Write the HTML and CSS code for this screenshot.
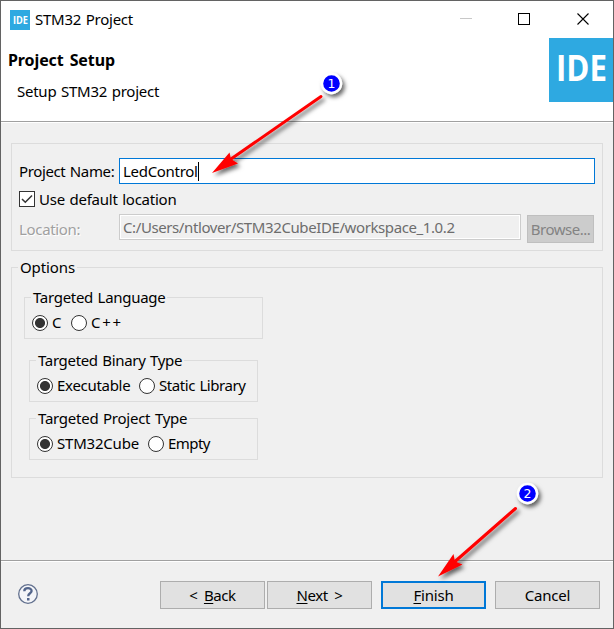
FILE: index.html
```html
<!DOCTYPE html>
<html lang="en">
<head>
<meta charset="utf-8">
<title>STM32 Project</title>
<link rel="stylesheet" href="styles.css">
</head>
<body>
<main class="window">
  <header class="titlebar">
    <svg class="app-icon" width="20" height="20"><rect width="20" height="20" fill="#2ea9e1"/><text x="3" y="13.500" textLength="15" lengthAdjust="spacingAndGlyphs">IDE</text></svg>
    <h1 class="title">STM32 Project</h1>
    <svg class="controls" width="130" height="14" fill="none">
      <path d="M0 6.500h12" stroke="#c8c8c8"/>
      <rect x="58.500" y="1.500" width="11" height="11" stroke="#000"/>
      <path d="M117.500 1.500l11 11M128.500 1.500l-11 11" stroke="#000" stroke-width="1.100"/>
    </svg>
  </header>
  <section class="banner">
    <div class="banner-text">
      <h2 class="heading">Project Setup</h2>
      <p class="subheading">Setup STM32 project</p>
    </div>
    <svg class="logo" width="64" height="64"><rect width="64" height="64" fill="#2ea9e1"/><text x="7" y="43" textLength="51" lengthAdjust="spacingAndGlyphs">IDE</text></svg>
  </section>
  <section class="content">
    <div class="group location-group">
      <label class="name-label t-name">Project Name:</label>
      <div class="field active"><span class="t-value">LedControl</span><i class="caret"></i></div>
      <label class="check-row"><svg width="16" height="16"><rect x=".5" y=".5" width="15" height="15" fill="#fff" stroke="#333"/><path d="M3 8l3.300 3.300L13 4.500" fill="none" stroke="#333" stroke-width="1.500"/></svg><span class="t-default">Use default location</span></label>
      <label class="location-label t-location">Location:</label>
      <div class="field disabled"><span class="t-path">C:/Users/ntlover/STM32CubeIDE/workspace_1.0.2</span></div>
      <button class="browse" disabled><span class="t-browse">Browse...</span></button>
    </div>
    <div class="group options">
      <div class="legend t-options">Options</div>
      <div class="group choice language">
        <div class="legend t-language">Targeted Language</div>
        <div class="radios"><i class="radio on"></i><span class="t-c">C</span><i class="radio"></i><span class="t-cpp">C++</span></div>
      </div>
      <div class="group choice binary">
        <div class="legend t-binary">Targeted Binary Type</div>
        <div class="radios"><i class="radio on"></i><span class="t-exe">Executable</span><i class="radio"></i><span class="t-static">Static Library</span></div>
      </div>
      <div class="group choice project">
        <div class="legend t-project">Targeted Project Type</div>
        <div class="radios"><i class="radio on"></i><span class="t-cube">STM32Cube</span><i class="radio"></i><span class="t-empty">Empty</span></div>
      </div>
    </div>
  </section>
  <footer class="footer">
    <svg class="help" width="20" height="20"><circle cx="10" cy="10" r="9.300" fill="#f4f5f8" stroke="#62708e" stroke-width="1.300"/><path d="M6.300 7.200C6.300 3.200 13.600 3.200 13.600 7C13.600 9.300 10.200 9.300 10.200 12.200" fill="none" stroke="#53658b" stroke-width="2.300"/><rect x="9" y="14" width="2.500" height="2.500" fill="#53658b"/></svg>
    <button class="btn back"><span class="t-back">&lt; <u>B</u>ack</span></button>
    <button class="btn next"><span class="t-next"><u>N</u>ext &gt;</span></button>
    <button class="btn finish"><span class="t-finish"><u>F</u>inish</span></button>
    <button class="btn cancel"><span class="t-cancel">Cancel</span></button>
  </footer>
  <svg class="annotations" width="614" height="629">
    <defs><filter id="shadow" x="-40%" y="-40%" width="190%" height="190%"><feDropShadow dx="2.500" dy="3" stdDeviation="2" flood-color="#000" flood-opacity=".6"/></filter></defs>
    <g filter="url(#shadow)">
      <path d="M321 96.500L231 159" stroke="#f00" stroke-width="3" stroke-linecap="round"/>
      <path d="M212 173L229.500 152.500L231 159L238 163.500Z" fill="#f00"/>
    </g>
    <g filter="url(#shadow)">
      <path d="M515.500 508.500L455 561.500" stroke="#f00" stroke-width="3" stroke-linecap="round"/>
      <path d="M438 576.500L453.500 554L455 561.500L462.500 564.500Z" fill="#f00"/>
    </g>
    <g class="marker"><circle cx="331.500" cy="83.500" r="9.500" filter="url(#shadow)"/><text x="331.500" y="88">1</text></g>
    <g class="marker"><circle cx="527.500" cy="493.500" r="9.500" filter="url(#shadow)"/><text x="527.500" y="498">2</text></g>
  </svg>
</main>
</body>
</html>
```
FILE: styles.css
```css
* { box-sizing: border-box; }
body { margin: 0; font: 15px/20px "Noto Sans", sans-serif; color: #000; letter-spacing: -.25px; word-spacing: 1px; }
h1, h2, p { margin: 0; font: inherit; }
span, label, .legend, .title, .heading, .subheading { white-space: nowrap; }
button { font: inherit; padding: 0; letter-spacing: inherit; word-spacing: inherit; }
u { text-decoration-thickness: 1px; text-underline-offset: 2px; }
svg text { letter-spacing: 0; word-spacing: 0; }
.window { width: 614px; height: 629px; border: 1px solid #636363; background: #f0f0f0; display: flex; flex-direction: column; position: relative; }
.titlebar { height: 37px; background: #fff; display: flex; align-items: center; padding: 0 23px 0 9px; }
.app-icon, .logo { overflow: visible; }
.app-icon text { font: 700 11px "Open Sans", sans-serif; fill: #fff; }
.title { margin: -2px 0 0 5px; flex: 1; }
.controls { margin-top: -1px; }
.banner { height: 83px; background: #fff; display: flex; justify-content: space-between; }
.banner-text { padding: 12px 0 0 7px; }
.heading { font-weight: 700; font-size: 16px; letter-spacing: -.1px; word-spacing: 2px; }
.subheading { padding: 11px 0 0 9px; }
.logo text { font: 700 36px "Open Sans", sans-serif; fill: #fff; }
.content { height: 439px; border-top: 1px solid #a0a0a0; box-shadow: inset 0 1px #fff; padding: 21px 10px 0; }
.group { border: 1px solid #dcdcdc; }
.location-group { height: 108px; padding: 14px 7px 0; display: grid; grid-template-columns: 100px 402px 73px; grid-template-rows: 26px 30px 29px; }
.name-label { padding-top: 3px; }
.field { height: 26px; display: flex; align-items: center; padding-left: 3px; }
.field.active { grid-column: 2 / 4; width: 476px; background: #fff; border: 1px solid #0078d7; }
.caret { width: 1px; height: 19px; background: #000; }
.check-row { grid-column: 1 / 4; display: flex; gap: 4px; align-items: center; }
.location-label { color: #a0a0a0; text-shadow: 1px 1px #fff; padding-top: 5px; }
.field.disabled { color: #6d6d6d; border: 1px solid #ccc; box-shadow: inset 0 0 0 1px #fff; }
.browse { width: 67px; height: 28px; margin: 1px 0 0 6px; border: 1px solid #bfbfbf; background: #ccc; color: #838383; }
.t-browse { letter-spacing: -.5px; }
.options { height: 211px; margin-top: 16px; padding: 0 0 0 12px; }
.legend { width: max-content; height: 20px; background: #f0f0f0; }
.options > .legend { margin: -11px 0 0 -6px; padding: 0 2px; }
.choice { height: 42px; }
.choice .legend { margin: -11px 0 0 6px; padding: 0 2px; }
.language { width: 239px; margin-top: 20px; }
.binary { width: 229px; margin: 21px 0 0 5px; }
.project { width: 229px; margin: 16px 0 0 5px; }
.radios { display: flex; align-items: center; margin: 6px 0 0 7px; }
.radios span { margin-top: -1px; }
.radio { width: 16px; height: 16px; flex: none; border: 1px solid #333; border-radius: 50%; background: #fff; margin-right: 4px; }
.radio.on { background: radial-gradient(circle, #333 4.6px, #fff 5.4px); }
.t-name { letter-spacing: -.38px; }
.t-value, .t-language { letter-spacing: -.3px; }
.t-location, .t-binary { letter-spacing: -.33px; }
.t-path { letter-spacing: -.4px; }
.t-options { letter-spacing: -.1px; }
.t-c { width: 19px; }
.t-cpp { letter-spacing: 1.7px; }
.t-exe { width: 82px; letter-spacing: -.3px; }
.t-static { letter-spacing: -.43px; }
.t-cube { width: 91px; letter-spacing: -.2px; }
.t-empty { letter-spacing: -.55px; }
.t-back, .t-next { word-spacing: 3px; letter-spacing: -.4px; }
.t-finish, .t-cancel { letter-spacing: -.2px; }
.footer { flex: 1; border-top: 1px solid #a0a0a0; box-shadow: inset 0 1px #fff; padding: 20px 13px 0 17px; display: flex; }
.help { margin: 3px 122px 0 0; }
.btn { width: 105px; height: 28px; border: 1px solid #adadad; background: #e1e1e1; color: #000; }
.next { margin-left: 2px; }
.finish { margin-left: 9px; border: 2px solid #0078d7; }
.cancel { margin-left: 9px; }
.annotations { position: absolute; left: -1px; top: -1px; pointer-events: none; }
.marker circle { fill: #00f; stroke: #fff; stroke-width: 2.400; }
.marker text { fill: #fff; font: 12.500px "DejaVu Sans", sans-serif; text-anchor: middle; }
```
